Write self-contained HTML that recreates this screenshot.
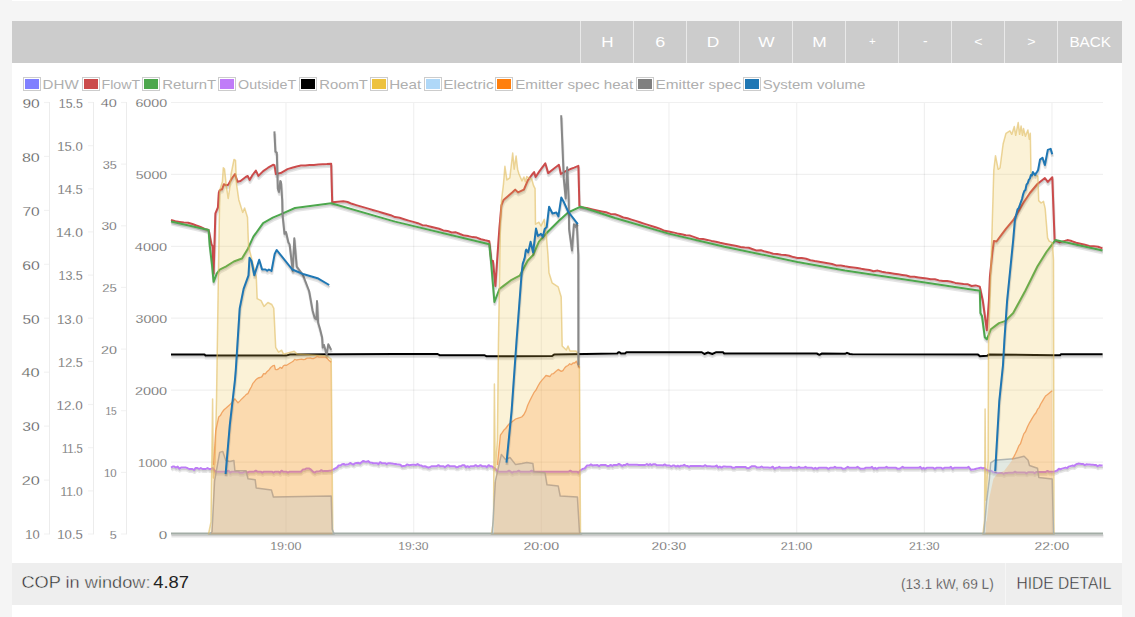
<!DOCTYPE html>
<html><head><meta charset="utf-8"><style>
html,body{margin:0;padding:0}
body{width:1135px;height:617px;position:relative;overflow:hidden;background:#f5f5f5;font-family:"Liberation Sans",sans-serif}
.panel{position:absolute;left:12px;top:63px;width:1110px;height:560px;background:#fff}
.toprow{position:absolute;left:12px;top:0;width:1110px;height:1px;background:#fff}
.bar{position:absolute;left:12px;top:21px;width:1110px;height:42px;background:#cccccc}
.btn{position:absolute;top:21px;height:42px;border-left:1px solid #e9e9e9;color:#fff;font-size:14px;line-height:41px;text-align:center}
.lb{position:absolute;top:77px;width:16px;height:12px;border:1px solid #ccc;box-sizing:content-box}
.lb div{position:absolute;left:1px;top:1px;width:14px;height:10px}
.lt{position:absolute;top:76px;font-size:13px;line-height:16px;color:#a6a6a6;white-space:nowrap}
.lab{position:absolute;line-height:1;white-space:nowrap;transform-origin:100% 50%;text-align:right}
.xl{position:absolute;top:540px;width:60px;text-align:center;font-size:11.5px;line-height:12px;color:#555}
.foot{position:absolute;left:12px;top:563px;width:1110px;height:42px;background:#eeeeee}
.cop{position:absolute;left:22px;top:572px;font-size:17px;line-height:20px;color:#333;white-space:nowrap}
.kw{position:absolute;left:901px;top:574px;font-size:15px;line-height:18px;color:#444;white-space:nowrap}
.sep{position:absolute;left:1005px;top:563px;width:1px;height:42px;background:#f6f6f6}
.hide{position:absolute;left:1017px;top:574px;font-size:15.5px;line-height:18px;color:#333;white-space:nowrap}
svg{position:absolute;left:0;top:0}
</style></head><body>
<div class="toprow"></div>
<div class="panel"></div>
<div class="bar"></div>
<div class="btn" style="left:580px;width:52px"></div><div class="btn" style="left:633px;width:52px"></div><div class="btn" style="left:686px;width:52px"></div><div class="btn" style="left:739px;width:52px"></div><div class="btn" style="left:792px;width:52px"></div><div class="btn" style="left:845px;width:52px"></div><div class="btn" style="left:898px;width:52px"></div><div class="btn" style="left:951px;width:52px"></div><div class="btn" style="left:1004px;width:52px"></div><div class="btn" style="left:1057px;width:64px"></div>
<div class="lb" style="left:23px"><div style="background:#8080ff"></div></div><div class="lb" style="left:82px"><div style="background:#cb4b4b"></div></div><div class="lb" style="left:142px"><div style="background:#4da74d"></div></div><div class="lb" style="left:218px"><div style="background:#c07cf8"></div></div><div class="lb" style="left:299px"><div style="background:#000000"></div></div><div class="lb" style="left:370px"><div style="background:#edc240"></div></div><div class="lb" style="left:424px"><div style="background:#afd8f8"></div></div><div class="lb" style="left:495px"><div style="background:#ff7f0e"></div></div><div class="lb" style="left:636px"><div style="background:#808080"></div></div><div class="lb" style="left:743px"><div style="background:#1f77b4"></div></div>
<svg width="1135" height="617" viewBox="0 0 1135 617">
<line x1="171" y1="534.0" x2="1103" y2="534.0" stroke="#000" stroke-opacity="0.06" stroke-width="1.2"/><line x1="171" y1="462.1" x2="1103" y2="462.1" stroke="#000" stroke-opacity="0.06" stroke-width="1.2"/><line x1="171" y1="390.2" x2="1103" y2="390.2" stroke="#000" stroke-opacity="0.06" stroke-width="1.2"/><line x1="171" y1="318.2" x2="1103" y2="318.2" stroke="#000" stroke-opacity="0.06" stroke-width="1.2"/><line x1="171" y1="246.3" x2="1103" y2="246.3" stroke="#000" stroke-opacity="0.06" stroke-width="1.2"/><line x1="171" y1="174.4" x2="1103" y2="174.4" stroke="#000" stroke-opacity="0.06" stroke-width="1.2"/><line x1="171" y1="102.5" x2="1103" y2="102.5" stroke="#000" stroke-opacity="0.06" stroke-width="1.2"/><line x1="286.0" y1="103" x2="286.0" y2="534" stroke="#000" stroke-opacity="0.06" stroke-width="1.2"/><line x1="413.7" y1="103" x2="413.7" y2="534" stroke="#000" stroke-opacity="0.06" stroke-width="1.2"/><line x1="541.3" y1="103" x2="541.3" y2="534" stroke="#000" stroke-opacity="0.06" stroke-width="1.2"/><line x1="669.0" y1="103" x2="669.0" y2="534" stroke="#000" stroke-opacity="0.06" stroke-width="1.2"/><line x1="796.7" y1="103" x2="796.7" y2="534" stroke="#000" stroke-opacity="0.06" stroke-width="1.2"/><line x1="924.4" y1="103" x2="924.4" y2="534" stroke="#000" stroke-opacity="0.06" stroke-width="1.2"/><line x1="1052.0" y1="103" x2="1052.0" y2="534" stroke="#000" stroke-opacity="0.06" stroke-width="1.2"/><line x1="49.5" y1="102" x2="49.5" y2="534.5" stroke="#000" stroke-opacity="0.075" stroke-width="1"/><line x1="93.5" y1="102" x2="93.5" y2="534.5" stroke="#000" stroke-opacity="0.075" stroke-width="1"/><line x1="126.5" y1="102" x2="126.5" y2="534.5" stroke="#000" stroke-opacity="0.075" stroke-width="1"/><line x1="44" y1="534.0" x2="49" y2="534.0" stroke="#000" stroke-opacity="0.05" stroke-width="1.2"/><line x1="44" y1="480.1" x2="49" y2="480.1" stroke="#000" stroke-opacity="0.05" stroke-width="1.2"/><line x1="44" y1="426.1" x2="49" y2="426.1" stroke="#000" stroke-opacity="0.05" stroke-width="1.2"/><line x1="44" y1="372.2" x2="49" y2="372.2" stroke="#000" stroke-opacity="0.05" stroke-width="1.2"/><line x1="44" y1="318.2" x2="49" y2="318.2" stroke="#000" stroke-opacity="0.05" stroke-width="1.2"/><line x1="44" y1="264.3" x2="49" y2="264.3" stroke="#000" stroke-opacity="0.05" stroke-width="1.2"/><line x1="44" y1="210.4" x2="49" y2="210.4" stroke="#000" stroke-opacity="0.05" stroke-width="1.2"/><line x1="44" y1="156.4" x2="49" y2="156.4" stroke="#000" stroke-opacity="0.05" stroke-width="1.2"/><line x1="44" y1="102.5" x2="49" y2="102.5" stroke="#000" stroke-opacity="0.05" stroke-width="1.2"/><line x1="88" y1="534.0" x2="93" y2="534.0" stroke="#000" stroke-opacity="0.05" stroke-width="1.2"/><line x1="88" y1="490.9" x2="93" y2="490.9" stroke="#000" stroke-opacity="0.05" stroke-width="1.2"/><line x1="88" y1="447.7" x2="93" y2="447.7" stroke="#000" stroke-opacity="0.05" stroke-width="1.2"/><line x1="88" y1="404.5" x2="93" y2="404.5" stroke="#000" stroke-opacity="0.05" stroke-width="1.2"/><line x1="88" y1="361.4" x2="93" y2="361.4" stroke="#000" stroke-opacity="0.05" stroke-width="1.2"/><line x1="88" y1="318.2" x2="93" y2="318.2" stroke="#000" stroke-opacity="0.05" stroke-width="1.2"/><line x1="88" y1="275.1" x2="93" y2="275.1" stroke="#000" stroke-opacity="0.05" stroke-width="1.2"/><line x1="88" y1="231.9" x2="93" y2="231.9" stroke="#000" stroke-opacity="0.05" stroke-width="1.2"/><line x1="88" y1="188.8" x2="93" y2="188.8" stroke="#000" stroke-opacity="0.05" stroke-width="1.2"/><line x1="88" y1="145.7" x2="93" y2="145.7" stroke="#000" stroke-opacity="0.05" stroke-width="1.2"/><line x1="88" y1="102.5" x2="93" y2="102.5" stroke="#000" stroke-opacity="0.05" stroke-width="1.2"/><line x1="121" y1="534.0" x2="126" y2="534.0" stroke="#000" stroke-opacity="0.05" stroke-width="1.2"/><line x1="121" y1="472.4" x2="126" y2="472.4" stroke="#000" stroke-opacity="0.05" stroke-width="1.2"/><line x1="121" y1="410.7" x2="126" y2="410.7" stroke="#000" stroke-opacity="0.05" stroke-width="1.2"/><line x1="121" y1="349.1" x2="126" y2="349.1" stroke="#000" stroke-opacity="0.05" stroke-width="1.2"/><line x1="121" y1="287.4" x2="126" y2="287.4" stroke="#000" stroke-opacity="0.05" stroke-width="1.2"/><line x1="121" y1="225.8" x2="126" y2="225.8" stroke="#000" stroke-opacity="0.05" stroke-width="1.2"/><line x1="121" y1="164.1" x2="126" y2="164.1" stroke="#000" stroke-opacity="0.05" stroke-width="1.2"/><line x1="121" y1="102.5" x2="126" y2="102.5" stroke="#000" stroke-opacity="0.05" stroke-width="1.2"/><polyline points="171.4,536.0 1103.4,536.0" fill="none" stroke="#000" stroke-opacity="0.1" stroke-width="3.0" stroke-linejoin="round"/><polyline points="171.3,535.2 1103.3,535.2" fill="none" stroke="#000" stroke-opacity="0.1" stroke-width="1.5" stroke-linejoin="round"/><polyline points="171.0,533.5 1103.0,533.5" fill="none" stroke="#a3ada6" stroke-width="2" stroke-linejoin="round"/><polyline points="171.4,222.5 175.7,223.7 180.0,224.4 184.3,225.1 188.6,225.2 192.8,226.5 196.9,227.9 200.9,229.4 205.0,231.5 209.0,232.4 211.9,247.0 213.0,248.5 214.0,276.2 215.8,215.8 218.3,210.0 219.2,195.4 219.9,193.1 221.3,192.1 222.4,192.0 224.2,186.8 226.7,187.7 228.6,187.2 232.5,180.5 235.4,176.5 237.9,184.3 240.9,183.5 246.1,179.5 248.1,178.5 250.0,182.4 252.9,177.5 256.3,173.1 258.8,178.4 263.6,173.6 268.5,170.2 273.4,167.3 274.9,167.8 276.3,176.5 281.1,175.6 287.9,171.6 292.5,170.3 297.1,169.0 301.4,168.1 305.8,167.8 310.1,167.6 314.4,167.3 318.7,167.0 323.0,166.8 327.3,166.5 331.6,166.3 332.6,204.8 338.2,204.3 343.7,203.8 348.0,204.4 352.4,206.3 356.7,207.6 361.0,208.8 365.3,210.1 369.6,211.4 373.9,212.6 378.2,213.9 382.5,215.2 386.8,216.4 391.1,217.7 395.4,219.6 400.0,220.3 404.6,221.7 409.1,223.0 413.7,224.4 418.3,225.7 422.8,227.7 427.0,228.1 431.2,229.1 435.4,230.2 439.6,231.2 443.7,232.9 447.9,233.3 452.1,235.0 456.3,234.8 460.5,236.5 464.6,238.1 468.8,238.5 473.0,239.6 477.2,240.0 481.4,241.7 485.6,242.7 489.7,243.8 491.7,263.0 493.4,263.5 495.8,288.4 497.8,259.0 499.8,230.5 501.8,207.9 503.9,202.5 508.3,198.7 512.6,195.0 515.6,192.1 518.5,194.9 524.3,192.1 528.2,182.8 532.1,177.5 534.5,174.6 536.0,179.5 539.9,173.6 545.7,165.8 548.6,175.6 553.5,171.7 559.3,167.3 561.3,176.5 566.1,173.6 570.4,171.8 574.6,170.0 578.8,168.3 579.8,208.2 581.1,209.8 587.1,210.5 593.0,211.9 597.5,212.8 602.0,213.8 606.5,214.8 611.0,216.4 615.4,216.8 619.6,218.1 623.7,220.0 627.8,220.7 632.0,222.1 636.1,223.4 640.2,224.7 644.3,226.0 648.5,227.3 652.6,228.7 656.7,230.0 660.9,231.3 665.0,233.2 669.1,234.0 673.4,234.9 677.7,235.8 682.0,236.8 686.3,237.7 690.6,238.1 694.8,239.6 699.1,241.1 703.4,241.5 707.7,242.4 712.0,243.3 716.3,244.3 720.5,245.2 724.8,246.2 728.9,247.0 732.9,247.7 737.0,248.5 741.1,249.3 745.1,250.1 749.2,250.3 753.2,251.7 757.3,253.1 761.3,252.7 765.4,254.1 769.4,254.8 773.5,256.2 777.6,256.4 781.6,257.2 785.7,257.4 789.7,258.2 793.8,259.6 797.8,260.4 802.2,260.5 806.5,261.3 810.8,262.7 815.1,263.4 819.5,264.2 823.8,264.9 828.1,265.7 832.5,266.5 836.8,267.8 841.1,268.0 845.4,268.8 849.5,269.4 853.6,270.0 857.7,270.6 861.8,271.2 865.9,271.8 869.9,272.5 874.0,273.7 878.1,273.1 882.2,274.3 886.3,274.9 890.4,275.5 894.5,276.1 898.5,276.8 902.6,277.4 906.7,278.0 910.8,279.2 914.9,279.2 919.0,279.8 923.0,280.4 927.1,281.1 931.2,281.7 935.3,281.7 939.4,282.9 943.5,283.5 947.6,283.5 951.6,284.2 955.7,285.4 959.8,286.0 963.9,286.6 968.0,286.6 972.1,288.4 976.1,287.8 980.2,289.1 983.2,303.3 987.2,332.7 989.3,303.3 990.3,279.0 992.8,254.5 994.3,243.4 996.9,244.0 1001.8,237.4 1006.3,231.4 1013.8,222.4 1019.1,213.4 1024.3,204.5 1030.3,195.5 1037.8,186.5 1045.3,180.5 1048.2,184.4 1052.7,179.7 1055.0,242.5 1060.2,244.9 1067.7,242.6 1072.1,243.6 1076.5,245.2 1080.9,246.3 1085.3,247.3 1089.7,248.3 1094.1,248.8 1098.5,249.2 1102.9,250.9" fill="none" stroke="#000" stroke-opacity="0.1" stroke-width="3.0" stroke-linejoin="round"/><polyline points="171.3,221.7 175.6,223.0 179.9,223.7 184.1,224.4 188.4,224.4 192.7,225.7 196.8,227.2 200.8,228.7 204.9,230.7 208.9,231.6 211.8,246.2 212.9,247.7 213.9,275.4 215.7,215.0 218.2,209.2 219.1,194.6 219.8,192.3 221.2,191.3 222.3,191.2 224.1,186.0 226.6,186.9 228.5,186.4 232.4,179.7 235.3,175.7 237.8,183.5 240.8,182.7 246.0,178.7 248.0,177.7 249.9,181.6 252.8,176.7 256.2,172.3 258.7,177.6 263.5,172.8 268.4,169.4 273.3,166.5 274.8,167.0 276.2,175.7 281.0,174.8 287.8,170.8 292.4,169.5 297.0,168.2 301.3,167.4 305.6,167.1 309.9,166.8 314.3,166.6 318.6,166.3 322.9,166.0 327.2,165.8 331.5,165.5 332.5,204.0 338.1,203.5 343.6,203.0 347.9,203.7 352.2,205.6 356.5,206.8 360.8,208.1 365.1,209.4 369.5,210.6 373.8,211.9 378.1,213.2 382.4,214.4 386.7,215.7 391.0,217.0 395.3,218.8 399.9,219.6 404.4,220.9 409.0,222.3 413.6,223.6 418.1,225.0 422.7,226.9 426.9,227.4 431.1,228.4 435.2,229.5 439.4,230.5 443.6,232.1 447.8,232.6 452.0,234.2 456.2,234.1 460.3,235.7 464.5,237.4 468.7,237.8 472.9,238.8 477.1,239.3 481.2,240.9 485.4,242.0 489.6,243.0 491.6,262.2 493.3,262.7 495.7,287.6 497.7,258.2 499.7,229.7 501.7,207.1 503.8,201.7 508.2,198.0 512.5,194.2 515.5,191.3 518.4,194.1 524.2,191.3 528.1,182.0 532.0,176.7 534.4,173.8 535.9,178.7 539.8,172.8 545.6,165.0 548.5,174.8 553.4,170.9 559.2,166.5 561.2,175.7 566.0,172.8 570.2,171.1 574.5,169.3 578.7,167.5 579.7,207.4 581.0,209.0 587.0,209.8 592.9,211.1 597.4,212.1 601.9,213.1 606.3,214.1 610.8,215.6 615.3,216.0 619.4,217.3 623.6,219.3 627.7,220.0 631.8,221.3 636.0,222.6 640.1,224.0 644.2,225.3 648.4,226.6 652.5,227.9 656.6,229.3 660.7,230.6 664.9,232.5 669.0,233.2 673.3,234.2 677.6,235.1 681.9,236.0 686.1,237.0 690.4,237.3 694.7,238.9 699.0,240.4 703.3,240.7 707.6,241.7 711.9,242.6 716.1,243.5 720.4,244.5 724.7,245.4 728.8,246.2 732.8,247.0 736.9,247.8 740.9,248.6 745.0,249.4 749.0,249.6 753.1,250.9 757.1,252.3 761.2,251.9 765.3,253.3 769.3,254.1 773.4,255.5 777.4,255.7 781.5,256.5 785.5,256.7 789.6,257.4 793.6,258.8 797.7,259.6 802.0,259.8 806.4,260.6 810.7,261.9 815.0,262.7 819.3,263.4 823.7,264.2 828.0,265.0 832.3,265.7 836.6,267.1 841.0,267.3 845.3,268.0 849.4,268.6 853.5,269.3 857.6,269.9 861.6,270.5 865.7,271.1 869.8,271.7 873.9,272.9 878.0,272.3 882.1,273.6 886.2,274.2 890.2,274.8 894.3,275.4 898.4,276.0 902.5,276.6 906.6,277.3 910.7,278.5 914.7,278.5 918.8,279.1 922.9,279.7 927.0,280.3 931.1,280.9 935.2,281.0 939.3,282.2 943.3,282.8 947.4,282.8 951.5,283.4 955.6,284.6 959.7,285.2 963.8,285.9 967.8,285.9 971.9,287.7 976.0,287.1 980.1,288.3 983.1,302.5 987.1,331.9 989.2,302.5 990.2,278.2 992.7,253.7 994.2,242.6 996.8,243.2 1001.7,236.6 1006.2,230.6 1013.7,221.6 1019.0,212.7 1024.2,203.7 1030.2,194.7 1037.7,185.7 1045.2,179.7 1048.1,183.6 1052.6,178.9 1054.9,241.7 1060.1,244.1 1067.6,241.8 1072.0,242.9 1076.4,244.5 1080.8,245.5 1085.2,246.6 1089.6,247.6 1094.0,248.0 1098.4,248.5 1102.8,250.1" fill="none" stroke="#000" stroke-opacity="0.1" stroke-width="1.5" stroke-linejoin="round"/><polyline points="171.0,220.0 175.3,221.3 179.6,222.0 183.8,222.6 188.1,222.7 192.4,224.0 196.4,225.5 200.5,226.9 204.6,229.0 208.6,229.9 211.5,244.5 212.6,246.0 213.6,273.7 215.4,213.3 217.9,207.5 218.8,192.9 219.5,190.6 220.9,189.6 222.0,189.5 223.8,184.3 226.3,185.2 228.2,184.7 232.1,178.0 235.0,174.0 237.5,181.8 240.5,181.0 245.7,177.0 247.7,176.0 249.6,179.9 252.5,175.0 255.9,170.6 258.4,175.9 263.2,171.1 268.1,167.7 273.0,164.8 274.5,165.3 275.9,174.0 280.7,173.1 287.5,169.1 292.1,167.8 296.7,166.5 301.0,165.6 305.3,165.4 309.6,165.1 313.9,164.9 318.3,164.6 322.6,164.3 326.9,164.1 331.2,163.8 332.2,202.3 337.8,201.8 343.3,201.3 347.6,202.0 351.9,203.8 356.2,205.1 360.5,206.4 364.8,207.6 369.1,208.9 373.5,210.2 377.8,211.4 382.1,212.7 386.4,214.0 390.7,215.2 395.0,217.1 399.6,217.8 404.1,219.2 408.7,220.6 413.3,221.9 417.8,223.2 422.4,225.2 426.6,225.6 430.8,226.7 434.9,227.7 439.1,228.8 443.3,230.4 447.5,230.9 451.7,232.5 455.9,232.3 460.0,234.0 464.2,235.6 468.4,236.1 472.6,237.1 476.8,237.6 480.9,239.2 485.1,240.3 489.3,241.3 491.3,260.5 493.0,261.0 495.4,285.9 497.4,256.5 499.4,228.0 501.4,205.4 503.5,200.0 507.9,196.2 512.2,192.5 515.2,189.6 518.1,192.4 523.9,189.6 527.8,180.3 531.7,175.0 534.1,172.1 535.6,177.0 539.5,171.1 545.3,163.3 548.2,173.1 553.1,169.2 558.9,164.8 560.9,174.0 565.7,171.1 569.9,169.3 574.2,167.6 578.4,165.8 579.4,205.7 580.7,207.3 586.7,208.1 592.6,209.4 597.1,210.4 601.6,211.4 606.0,212.3 610.5,213.9 615.0,214.3 619.1,215.6 623.3,217.5 627.4,218.3 631.5,219.6 635.7,220.9 639.8,222.2 643.9,223.6 648.0,224.9 652.2,226.2 656.3,227.5 660.4,228.9 664.6,230.8 668.7,231.5 673.0,232.4 677.3,233.4 681.6,234.3 685.8,235.3 690.1,235.6 694.4,237.1 698.7,238.7 703.0,239.0 707.3,239.9 711.5,240.9 715.8,241.8 720.1,242.8 724.4,243.7 728.5,244.5 732.5,245.3 736.6,246.1 740.6,246.9 744.7,247.6 748.7,247.8 752.8,249.2 756.8,250.6 760.9,250.2 765.0,251.6 769.0,252.4 773.1,253.8 777.1,254.0 781.2,254.7 785.2,254.9 789.3,255.7 793.3,257.1 797.4,257.9 801.7,258.1 806.1,258.8 810.4,260.2 814.7,261.0 819.0,261.7 823.4,262.5 827.7,263.2 832.0,264.0 836.3,265.4 840.7,265.5 845.0,266.3 849.1,266.9 853.2,267.5 857.3,268.1 861.3,268.8 865.4,269.4 869.5,270.0 873.6,271.2 877.7,270.6 881.8,271.8 885.8,272.5 889.9,273.1 894.0,273.7 898.1,274.3 902.2,274.9 906.3,275.5 910.4,276.7 914.4,276.8 918.5,277.4 922.6,278.0 926.7,278.6 930.8,279.2 934.9,279.2 939.0,280.4 943.0,281.1 947.1,281.1 951.2,281.7 955.3,282.9 959.4,283.5 963.5,284.1 967.5,284.2 971.6,286.0 975.7,285.4 979.8,286.6 982.8,300.8 986.8,330.2 988.9,300.8 989.9,276.5 992.4,252.0 993.9,240.9 996.5,241.5 1001.4,234.9 1005.9,228.9 1013.4,219.9 1018.6,210.9 1023.9,202.0 1029.9,193.0 1037.4,184.0 1044.9,178.0 1047.8,181.9 1052.3,177.2 1054.6,240.0 1059.8,242.4 1067.3,240.1 1071.7,241.1 1076.1,242.8 1080.5,243.8 1084.9,244.8 1089.3,245.9 1093.7,246.3 1098.1,246.8 1102.5,248.4" fill="none" stroke="#cb4b4b" stroke-width="2" stroke-linejoin="round"/><polyline points="171.4,224.1 209.0,232.6 210.0,246.8 212.4,267.5 214.0,284.3 217.1,276.2 220.1,272.1 226.2,269.1 234.3,264.0 242.4,261.0 248.4,250.9 253.8,239.2 263.5,225.6 273.2,220.2 281.0,216.8 295.4,210.5 331.6,205.8 395.4,224.1 489.7,246.8 491.7,267.1 494.8,304.5 499.8,291.5 503.9,288.4 512.0,282.3 520.1,278.2 528.2,263.0 533.5,257.5 539.3,244.2 549.0,233.5 558.8,223.8 568.5,215.0 581.1,209.2 600.4,215.5 615.4,220.5 669.1,236.1 724.8,249.2 797.8,264.5 845.4,272.9 980.2,293.2 980.8,315.5 982.4,318.5 985.2,339.8 987.2,341.8 991.3,331.7 995.4,328.6 999.4,325.6 1005.5,323.6 1013.6,315.5 1025.7,293.2 1037.9,268.8 1046.8,254.5 1055.7,242.6 1102.9,253.1" fill="none" stroke="#000" stroke-opacity="0.1" stroke-width="3.0" stroke-linejoin="round"/><polyline points="171.3,223.3 208.9,231.8 209.9,246.0 212.3,266.7 213.9,283.5 217.0,275.4 220.0,271.3 226.1,268.3 234.2,263.2 242.3,260.2 248.3,250.1 253.7,238.4 263.4,224.8 273.1,219.4 280.9,216.0 295.3,209.7 331.5,205.0 395.3,223.3 489.6,246.0 491.6,266.3 494.7,303.7 499.7,290.7 503.8,287.6 511.9,281.5 520.0,277.4 528.1,262.2 533.4,256.7 539.2,243.4 548.9,232.7 558.7,223.0 568.4,214.2 581.0,208.4 600.3,214.7 615.3,219.7 669.0,235.3 724.7,248.4 797.7,263.7 845.3,272.1 980.1,292.4 980.7,314.7 982.3,317.7 985.1,339.0 987.1,341.0 991.2,330.9 995.3,327.8 999.3,324.8 1005.4,322.8 1013.5,314.7 1025.6,292.4 1037.8,268.0 1046.7,253.7 1055.6,241.8 1102.8,252.3" fill="none" stroke="#000" stroke-opacity="0.1" stroke-width="1.5" stroke-linejoin="round"/><polyline points="171.0,221.6 208.6,230.1 209.6,244.3 212.0,265.0 213.6,281.8 216.7,273.7 219.7,269.6 225.8,266.6 233.9,261.5 242.0,258.5 248.0,248.4 253.4,236.7 263.1,223.1 272.8,217.7 280.6,214.3 295.0,208.0 331.2,203.3 395.0,221.6 489.3,244.3 491.3,264.6 494.4,302.0 499.4,289.0 503.5,285.9 511.6,279.8 519.7,275.7 527.8,260.5 533.1,255.0 538.9,241.7 548.6,231.0 558.4,221.3 568.1,212.5 580.7,206.7 600.0,213.0 615.0,218.0 668.7,233.6 724.4,246.7 797.4,262.0 845.0,270.4 979.8,290.7 980.4,313.0 982.0,316.0 984.8,337.3 986.8,339.3 990.9,329.2 995.0,326.1 999.0,323.1 1005.1,321.1 1013.2,313.0 1025.3,290.7 1037.5,266.3 1046.4,252.0 1055.3,240.1 1102.5,250.6" fill="none" stroke="#4da74d" stroke-width="2" stroke-linejoin="round"/><polyline points="171.4,470.1 173.1,469.1 174.8,469.1 176.4,470.1 178.1,469.1 179.8,471.1 181.4,470.1 183.1,470.1 184.8,470.1 186.4,470.1 187.7,470.5 189.4,471.5 191.1,471.5 192.8,471.5 194.5,472.5 196.2,470.5 197.9,470.5 199.5,471.5 201.2,470.5 202.9,471.5 204.6,471.5 206.3,471.5 208.0,470.5 209.7,471.5 211.3,471.5 213.0,470.5 216.1,474.2 217.7,474.2 219.3,474.2 221.0,474.2 222.6,474.2 224.2,474.2 225.8,474.2 227.4,474.2 229.0,473.2 230.6,475.2 232.2,474.2 233.8,474.2 235.4,474.2 237.0,474.2 238.6,474.2 240.2,475.2 241.8,475.2 243.4,475.2 245.0,474.2 246.6,474.2 248.2,475.2 249.9,474.2 251.5,474.2 253.1,474.2 254.7,474.2 256.3,473.2 257.9,474.2 259.5,474.2 261.1,474.2 262.7,475.2 264.3,474.2 265.9,474.2 267.5,474.2 269.1,474.2 270.7,474.2 272.3,474.2 273.9,475.2 275.5,474.2 277.1,474.2 278.8,474.2 280.4,475.2 282.0,473.2 283.6,474.2 285.2,474.2 286.8,474.2 288.4,475.2 290.0,474.2 291.6,474.2 293.2,474.2 294.8,474.2 296.4,474.2 298.0,474.2 299.6,474.2 301.2,474.2 303.2,472.1 304.9,472.1 306.5,471.1 308.2,471.1 309.8,471.1 311.4,472.1 313.4,474.2 315.1,475.1 316.7,474.0 318.4,473.9 320.1,473.8 321.7,472.7 323.4,473.6 325.0,473.5 326.7,473.4 328.3,473.3 330.0,473.3 331.6,473.2 333.5,472.1 335.4,471.1 337.2,470.0 339.1,468.0 340.9,468.0 342.6,466.7 344.2,466.5 345.8,467.2 347.4,467.0 349.1,466.7 350.7,465.5 352.3,466.2 353.9,467.0 355.6,465.7 357.2,465.5 358.8,465.2 360.4,466.0 363.4,463.5 365.2,463.8 366.9,464.2 368.7,463.6 370.4,464.9 372.2,465.3 373.9,465.7 375.6,465.7 377.2,465.7 378.9,466.7 380.5,464.7 382.2,465.7 383.8,465.7 385.5,465.7 387.1,466.7 388.8,465.7 390.4,465.7 392.2,465.9 393.9,466.2 395.6,466.4 397.4,466.7 399.1,466.9 400.8,467.2 402.4,468.7 404.2,468.4 405.9,468.2 407.6,466.9 409.4,467.7 411.1,467.4 412.8,467.2 414.6,467.3 416.3,467.4 418.1,466.6 419.8,467.7 421.6,467.8 423.3,469.0 425.3,468.7 427.3,469.4 429.3,470.2 432.3,468.7 434.0,468.7 435.6,468.7 437.2,468.7 438.8,467.7 440.4,468.7 442.0,468.7 443.7,468.7 445.3,469.7 446.9,468.7 448.5,467.7 450.1,468.7 451.8,468.7 453.4,468.7 455.0,468.7 456.6,469.7 458.2,469.7 459.9,468.7 461.5,468.7 463.1,467.7 464.7,467.7 466.3,469.7 468.0,468.7 469.6,469.7 471.2,468.7 472.8,468.7 474.4,468.7 476.0,467.7 477.7,468.7 479.3,468.7 480.9,467.7 482.5,468.7 484.1,468.7 485.8,468.7 487.4,469.7 489.0,467.7 490.6,468.7 492.2,468.7 494.1,470.0 496.0,471.4 497.9,473.8 499.7,474.2 501.3,474.2 503.0,474.2 504.6,474.2 506.2,474.2 507.8,474.2 509.4,473.2 511.0,474.2 512.6,475.2 514.3,474.2 515.9,474.2 517.5,474.2 519.1,473.2 520.7,474.2 522.3,474.2 523.9,474.2 525.6,474.2 527.2,474.2 528.8,474.2 530.4,474.2 532.0,473.2 533.6,474.2 535.2,474.2 536.9,474.2 538.5,474.2 540.1,474.2 541.7,474.2 543.3,474.2 544.9,474.2 546.5,474.2 548.2,474.2 549.8,474.2 551.4,474.2 553.0,474.2 554.6,474.2 556.2,474.2 557.8,474.2 559.5,474.2 561.1,474.2 562.7,474.2 564.3,474.2 565.9,474.2 567.5,474.2 569.1,474.2 570.8,473.2 572.4,474.2 574.0,474.2 575.6,474.2 577.2,474.2 578.8,475.2 580.9,472.8 582.9,471.4 584.9,471.1 587.3,468.0 589.7,468.0 591.4,466.9 593.0,467.8 594.6,467.7 596.2,467.7 597.9,467.6 599.5,468.5 601.1,467.5 602.8,467.5 604.4,467.4 606.1,467.4 607.8,468.4 609.4,468.4 611.1,467.4 612.7,468.4 614.4,467.4 616.0,467.4 617.7,467.4 619.4,466.4 621.0,467.3 622.7,468.3 624.3,467.3 626.0,467.3 627.6,466.3 629.3,467.3 631.0,467.3 632.6,467.3 634.3,467.3 635.9,467.3 637.6,467.3 639.2,467.3 640.8,467.4 642.4,467.4 644.0,467.4 645.7,467.5 647.3,466.5 648.9,467.5 650.5,466.6 652.2,467.6 653.8,466.6 655.4,466.7 657.0,467.7 658.7,467.7 660.3,467.8 661.9,467.8 663.5,467.8 665.1,466.9 666.8,467.9 668.4,467.9 670.0,468.0 671.6,469.0 673.3,468.0 674.9,468.1 676.5,469.1 678.1,468.1 679.7,469.2 681.4,468.2 683.0,468.2 684.6,467.3 686.2,468.3 687.9,468.3 689.5,469.4 691.1,468.4 692.7,468.4 694.4,468.5 696.0,468.5 697.6,468.5 699.2,468.6 700.8,468.6 702.5,468.6 704.1,468.7 705.7,467.7 707.3,468.7 709.0,468.8 710.6,468.8 712.2,468.8 713.8,468.9 715.5,468.9 717.1,467.9 718.7,470.0 720.3,469.0 721.9,470.0 723.6,469.1 725.2,469.1 726.8,469.1 728.4,469.2 730.0,469.2 731.6,469.2 733.2,470.3 734.8,470.3 736.4,469.3 738.0,469.4 739.6,469.4 741.2,469.5 742.8,469.5 744.4,469.5 746.0,469.6 747.6,470.6 749.2,470.6 750.8,469.7 752.4,468.7 754.0,468.7 755.6,468.8 757.2,469.8 758.8,469.9 760.4,469.9 762.0,468.9 763.6,470.0 765.2,470.0 766.8,470.0 768.4,470.1 770.0,470.1 771.6,470.2 773.2,469.2 774.8,471.2 776.4,470.3 778.1,470.3 779.7,469.3 781.3,470.3 783.0,470.3 784.6,470.3 786.3,470.3 787.9,470.3 789.5,470.3 791.2,469.3 792.8,470.3 794.5,470.3 796.1,470.3 797.7,470.3 799.4,469.3 801.0,470.3 802.6,470.3 804.3,470.3 805.9,469.3 807.6,470.3 809.2,470.3 810.8,470.3 812.5,470.3 814.1,471.3 815.8,470.3 817.4,471.3 819.0,470.3 820.7,470.3 822.3,470.3 823.9,470.3 825.6,470.3 827.2,470.3 828.9,471.3 830.5,470.3 832.1,470.3 833.7,470.3 835.4,469.3 837.0,470.3 838.6,470.3 840.2,470.3 841.8,470.3 843.4,471.3 845.0,471.3 846.6,470.3 848.2,469.3 849.9,470.3 851.5,470.3 853.1,470.3 854.7,470.3 856.3,470.3 857.9,469.3 859.5,470.3 861.1,471.3 862.7,471.3 864.3,471.3 866.0,470.3 867.6,470.3 869.2,470.3 870.8,470.3 872.4,469.3 874.0,471.3 875.6,470.3 877.2,471.3 878.8,470.3 880.5,470.3 882.1,470.3 883.7,470.3 885.3,470.3 886.9,469.3 888.5,470.3 890.1,470.3 891.7,470.3 893.3,470.3 894.9,470.3 896.6,470.3 898.2,471.3 899.8,471.3 901.4,470.3 903.0,469.3 904.6,470.3 906.2,470.3 907.8,470.3 909.4,470.3 911.1,470.3 912.7,470.3 914.3,470.3 915.9,470.3 917.5,470.3 919.1,470.3 920.7,469.3 922.3,471.3 923.9,470.3 925.5,471.3 927.2,470.3 928.8,470.3 930.4,470.3 932.0,470.3 933.6,470.3 935.2,471.3 936.8,470.3 938.4,470.3 940.0,470.3 941.7,470.3 943.3,471.3 944.9,470.3 946.5,470.3 948.1,470.3 949.7,470.3 951.3,469.3 952.9,471.3 954.5,470.3 956.1,470.3 957.8,470.3 959.4,470.3 961.0,470.3 962.6,470.3 964.2,470.3 965.8,470.3 967.4,470.3 969.0,469.3 971.2,472.2 973.4,472.1 975.0,471.7 976.6,471.3 978.2,470.9 979.8,470.5 981.4,470.1 983.1,470.7 984.8,470.4 986.5,472.1 988.2,472.8 989.9,473.5 991.6,473.2 993.7,474.6 995.7,475.1 997.7,475.6 999.4,475.5 1001.0,475.5 1002.6,475.4 1004.2,476.4 1005.8,475.4 1007.5,475.3 1009.1,475.3 1010.7,475.2 1012.3,475.2 1013.9,475.2 1015.6,474.1 1017.2,475.1 1018.8,475.0 1020.4,475.0 1022.0,475.0 1023.7,474.9 1025.3,474.9 1026.9,475.8 1028.5,474.8 1030.1,474.8 1031.8,474.7 1033.4,474.7 1035.0,475.6 1036.6,474.6 1038.2,474.6 1039.9,474.5 1041.5,474.5 1043.1,474.4 1044.7,474.4 1046.3,474.4 1048.0,473.3 1049.6,474.3 1051.2,474.2 1052.8,474.2 1054.4,474.2 1056.1,473.5 1057.7,472.9 1059.3,471.3 1060.9,471.7 1062.5,471.1 1064.2,470.6 1065.9,470.1 1067.6,470.6 1069.3,469.1 1071.0,468.6 1072.6,468.1 1074.7,468.4 1076.7,466.7 1078.7,466.1 1080.4,466.2 1082.0,466.3 1083.6,466.5 1085.2,467.6 1086.8,466.7 1088.5,466.9 1090.1,467.0 1091.7,467.1 1093.3,467.3 1094.9,467.4 1096.6,467.5 1098.2,468.7 1099.8,467.8 1101.4,467.9 1103.0,468.1" fill="none" stroke="#000" stroke-opacity="0.1" stroke-width="3.0" stroke-linejoin="round"/><polyline points="171.3,469.3 173.0,468.3 174.6,468.3 176.3,469.3 178.0,468.3 179.6,470.3 181.3,469.3 183.0,469.3 184.6,469.3 186.3,469.3 187.6,469.7 189.3,470.7 191.0,470.7 192.7,470.7 194.4,471.7 196.0,469.7 197.7,469.7 199.4,470.7 201.1,469.7 202.8,470.7 204.5,470.7 206.2,470.7 207.8,469.7 209.5,470.7 211.2,470.7 212.9,469.7 216.0,473.4 217.6,473.4 219.2,473.4 220.8,473.4 222.4,473.4 224.0,473.4 225.6,473.4 227.2,473.4 228.8,472.4 230.5,474.4 232.1,473.4 233.7,473.4 235.3,473.4 236.9,473.4 238.5,473.4 240.1,474.4 241.7,474.4 243.3,474.4 244.9,473.4 246.5,473.4 248.1,474.4 249.7,473.4 251.3,473.4 252.9,473.4 254.5,473.4 256.1,472.4 257.8,473.4 259.4,473.4 261.0,473.4 262.6,474.4 264.2,473.4 265.8,473.4 267.4,473.4 269.0,473.4 270.6,473.4 272.2,473.4 273.8,474.4 275.4,473.4 277.0,473.4 278.6,473.4 280.2,474.4 281.8,472.4 283.4,473.4 285.0,473.4 286.7,473.4 288.3,474.4 289.9,473.4 291.5,473.4 293.1,473.4 294.7,473.4 296.3,473.4 297.9,473.4 299.5,473.4 301.1,473.4 303.1,471.3 304.7,471.3 306.4,470.3 308.0,470.3 309.7,470.3 311.3,471.3 313.3,473.4 315.0,474.3 316.6,473.2 318.3,473.2 319.9,473.1 321.6,472.0 323.2,472.9 324.9,472.8 326.5,472.7 328.2,472.6 329.8,472.5 331.5,472.4 333.4,471.4 335.2,470.3 337.1,469.3 338.9,467.3 340.8,467.2 342.4,466.0 344.1,465.7 345.7,466.5 347.3,466.2 348.9,466.0 350.6,464.7 352.2,465.5 353.8,466.2 355.4,465.0 357.1,464.7 358.7,464.5 360.3,465.2 363.3,462.7 365.1,463.1 366.8,463.5 368.6,462.8 370.3,464.2 372.1,464.6 373.8,464.9 375.5,464.9 377.1,464.9 378.8,465.9 380.4,463.9 382.1,464.9 383.7,464.9 385.4,464.9 387.0,465.9 388.7,464.9 390.3,464.9 392.0,465.2 393.8,465.4 395.5,465.7 397.2,465.9 399.0,466.2 400.7,466.4 402.3,467.9 404.0,467.7 405.8,467.4 407.5,466.2 409.2,466.9 411.0,466.7 412.7,466.4 414.5,466.6 416.2,466.7 418.0,465.8 419.7,467.0 421.5,467.1 423.2,468.2 425.2,468.0 427.2,468.7 429.2,469.4 432.2,467.9 433.8,467.9 435.4,467.9 437.1,467.9 438.7,466.9 440.3,467.9 441.9,467.9 443.5,467.9 445.2,468.9 446.8,467.9 448.4,466.9 450.0,467.9 451.6,467.9 453.2,467.9 454.9,467.9 456.5,468.9 458.1,468.9 459.7,467.9 461.3,467.9 463.0,466.9 464.6,466.9 466.2,468.9 467.8,467.9 469.4,468.9 471.1,467.9 472.7,467.9 474.3,467.9 475.9,466.9 477.5,467.9 479.2,467.9 480.8,466.9 482.4,467.9 484.0,467.9 485.6,467.9 487.2,468.9 488.9,466.9 490.5,467.9 492.1,467.9 494.0,469.3 495.9,470.7 497.7,473.0 499.6,473.4 501.2,473.4 502.8,473.4 504.4,473.4 506.1,473.4 507.7,473.4 509.3,472.4 510.9,473.4 512.5,474.4 514.1,473.4 515.7,473.4 517.4,473.4 519.0,472.4 520.6,473.4 522.2,473.4 523.8,473.4 525.4,473.4 527.0,473.4 528.7,473.4 530.3,473.4 531.9,472.4 533.5,473.4 535.1,473.4 536.7,473.4 538.3,473.4 540.0,473.4 541.6,473.4 543.2,473.4 544.8,473.4 546.4,473.4 548.0,473.4 549.6,473.4 551.3,473.4 552.9,473.4 554.5,473.4 556.1,473.4 557.7,473.4 559.3,473.4 560.9,473.4 562.6,473.4 564.2,473.4 565.8,473.4 567.4,473.4 569.0,473.4 570.6,472.4 572.2,473.4 573.9,473.4 575.5,473.4 577.1,473.4 578.7,474.4 580.7,472.1 582.8,470.7 584.8,470.3 587.2,467.3 589.6,467.2 591.2,466.2 592.9,467.1 594.5,467.0 596.1,466.9 597.7,466.9 599.4,467.8 601.0,466.7 602.7,466.7 604.3,466.7 606.0,466.7 607.6,467.7 609.3,467.7 610.9,466.7 612.6,467.7 614.3,466.6 615.9,466.6 617.6,466.6 619.2,465.6 620.9,466.6 622.5,467.6 624.2,466.6 625.9,466.6 627.5,465.6 629.2,466.6 630.8,466.6 632.5,466.5 634.1,466.5 635.8,466.5 637.4,466.6 639.0,466.6 640.7,466.6 642.3,466.7 643.9,466.7 645.5,466.7 647.2,465.8 648.8,466.8 650.4,465.8 652.0,466.9 653.7,465.9 655.3,465.9 656.9,467.0 658.5,467.0 660.1,467.0 661.8,467.1 663.4,467.1 665.0,466.1 666.6,467.2 668.3,467.2 669.9,467.2 671.5,468.3 673.1,467.3 674.8,467.3 676.4,468.4 678.0,467.4 679.6,468.4 681.2,467.5 682.9,467.5 684.5,466.5 686.1,467.6 687.7,467.6 689.4,468.6 691.0,467.7 692.6,467.7 694.2,467.7 695.8,467.8 697.5,467.8 699.1,467.8 700.7,467.9 702.3,467.9 704.0,467.9 705.6,467.0 707.2,468.0 708.8,468.0 710.5,468.1 712.1,468.1 713.7,468.1 715.3,468.2 716.9,467.2 718.6,469.2 720.2,468.3 721.8,469.3 723.4,468.3 725.1,468.4 726.7,468.4 728.3,468.4 729.9,468.5 731.5,468.5 733.1,469.5 734.7,469.6 736.3,468.6 737.9,468.6 739.5,468.7 741.1,468.7 742.7,468.8 744.3,468.8 745.9,468.8 747.5,469.9 749.1,469.9 750.7,468.9 752.3,468.0 753.9,468.0 755.5,468.0 757.1,469.1 758.7,469.1 760.3,469.2 761.9,468.2 763.5,469.2 765.1,469.3 766.7,469.3 768.3,469.3 769.9,469.4 771.5,469.4 773.1,468.5 774.7,470.5 776.3,469.5 777.9,469.5 779.6,468.5 781.2,469.5 782.9,469.5 784.5,469.5 786.1,469.5 787.8,469.5 789.4,469.5 791.0,468.5 792.7,469.5 794.3,469.5 796.0,469.5 797.6,469.5 799.2,468.5 800.9,469.5 802.5,469.5 804.2,469.5 805.8,468.5 807.4,469.5 809.1,469.5 810.7,469.5 812.3,469.5 814.0,470.5 815.6,469.5 817.3,470.5 818.9,469.5 820.5,469.5 822.2,469.5 823.8,469.5 825.5,469.5 827.1,469.5 828.7,470.5 830.4,469.5 832.0,469.5 833.6,469.5 835.2,468.5 836.8,469.5 838.4,469.5 840.1,469.5 841.7,469.5 843.3,470.5 844.9,470.5 846.5,469.5 848.1,468.5 849.7,469.5 851.3,469.5 852.9,469.5 854.6,469.5 856.2,469.5 857.8,468.5 859.4,469.5 861.0,470.5 862.6,470.5 864.2,470.5 865.8,469.5 867.4,469.5 869.0,469.5 870.7,469.5 872.3,468.5 873.9,470.5 875.5,469.5 877.1,470.5 878.7,469.5 880.3,469.5 881.9,469.5 883.5,469.5 885.2,469.5 886.8,468.5 888.4,469.5 890.0,469.5 891.6,469.5 893.2,469.5 894.8,469.5 896.4,469.5 898.0,470.5 899.6,470.5 901.3,469.5 902.9,468.5 904.5,469.5 906.1,469.5 907.7,469.5 909.3,469.5 910.9,469.5 912.5,469.5 914.1,469.5 915.8,469.5 917.4,469.5 919.0,469.5 920.6,468.5 922.2,470.5 923.8,469.5 925.4,470.5 927.0,469.5 928.6,469.5 930.2,469.5 931.9,469.5 933.5,469.5 935.1,470.5 936.7,469.5 938.3,469.5 939.9,469.5 941.5,469.5 943.1,470.5 944.7,469.5 946.4,469.5 948.0,469.5 949.6,469.5 951.2,468.5 952.8,470.5 954.4,469.5 956.0,469.5 957.6,469.5 959.2,469.5 960.9,469.5 962.5,469.5 964.1,469.5 965.7,469.5 967.3,469.5 968.9,468.5 971.1,471.4 973.3,471.3 974.9,470.9 976.5,470.5 978.1,470.1 979.7,469.7 981.3,469.3 983.0,470.0 984.7,469.7 986.4,471.4 988.1,472.1 989.8,472.7 991.5,472.4 993.5,473.9 995.6,474.4 997.6,474.8 999.2,474.8 1000.8,474.7 1002.5,474.7 1004.1,475.7 1005.7,474.6 1007.3,474.6 1008.9,474.5 1010.6,474.5 1012.2,474.5 1013.8,474.4 1015.4,473.4 1017.0,474.3 1018.7,474.3 1020.3,474.3 1021.9,474.2 1023.5,474.2 1025.1,474.1 1026.8,475.1 1028.4,474.1 1030.0,474.0 1031.6,474.0 1033.2,473.9 1034.9,474.9 1036.5,473.9 1038.1,473.8 1039.7,473.8 1041.3,473.7 1043.0,473.7 1044.6,473.7 1046.2,473.6 1047.8,472.6 1049.4,473.5 1051.1,473.5 1052.7,473.5 1054.3,473.4 1055.9,472.8 1057.5,472.2 1059.2,470.6 1060.8,470.9 1062.4,470.3 1064.1,469.8 1065.8,469.3 1067.5,469.8 1069.1,468.3 1070.8,467.8 1072.5,467.3 1074.5,467.7 1076.6,466.0 1078.6,465.3 1080.2,465.5 1081.8,465.6 1083.5,465.7 1085.1,466.9 1086.7,466.0 1088.3,466.1 1089.9,466.3 1091.6,466.4 1093.2,466.5 1094.8,466.7 1096.4,466.8 1098.0,467.9 1099.7,467.1 1101.3,467.2 1102.9,467.3" fill="none" stroke="#000" stroke-opacity="0.1" stroke-width="1.5" stroke-linejoin="round"/><polyline points="171.0,467.6 172.7,466.6 174.3,466.6 176.0,467.6 177.7,466.6 179.3,468.6 181.0,467.6 182.7,467.6 184.3,467.6 186.0,467.6 187.3,468.0 189.0,469.0 190.7,469.0 192.4,469.0 194.0,470.0 195.7,468.0 197.4,468.0 199.1,469.0 200.8,468.0 202.5,469.0 204.2,469.0 205.9,469.0 207.5,468.0 209.2,469.0 210.9,469.0 212.6,468.0 215.7,471.7 217.3,471.7 218.9,471.7 220.5,471.7 222.1,471.7 223.7,471.7 225.3,471.7 226.9,471.7 228.5,470.7 230.2,472.7 231.8,471.7 233.4,471.7 235.0,471.7 236.6,471.7 238.2,471.7 239.8,472.7 241.4,472.7 243.0,472.7 244.6,471.7 246.2,471.7 247.8,472.7 249.4,471.7 251.0,471.7 252.6,471.7 254.2,471.7 255.8,470.7 257.4,471.7 259.1,471.7 260.7,471.7 262.3,472.7 263.9,471.7 265.5,471.7 267.1,471.7 268.7,471.7 270.3,471.7 271.9,471.7 273.5,472.7 275.1,471.7 276.7,471.7 278.3,471.7 279.9,472.7 281.5,470.7 283.1,471.7 284.7,471.7 286.3,471.7 288.0,472.7 289.6,471.7 291.2,471.7 292.8,471.7 294.4,471.7 296.0,471.7 297.6,471.7 299.2,471.7 300.8,471.7 302.8,469.6 304.4,469.6 306.1,468.6 307.7,468.6 309.4,468.6 311.0,469.6 313.0,471.7 314.7,472.6 316.3,471.5 318.0,471.4 319.6,471.3 321.3,470.2 322.9,471.2 324.6,471.1 326.2,471.0 327.9,470.9 329.5,470.8 331.2,470.7 333.1,469.7 334.9,468.6 336.8,467.6 338.6,465.5 340.5,465.5 342.1,464.2 343.8,464.0 345.4,464.8 347.0,464.5 348.6,464.2 350.2,463.0 351.9,463.8 353.5,464.5 355.1,463.2 356.8,463.0 358.4,462.8 360.0,463.5 363.0,461.0 364.8,461.4 366.5,461.7 368.2,461.1 370.0,462.5 371.8,462.8 373.5,463.2 375.1,463.2 376.8,463.2 378.4,464.2 380.1,462.2 381.8,463.2 383.4,463.2 385.1,463.2 386.7,464.2 388.4,463.2 390.0,463.2 391.7,463.4 393.5,463.7 395.2,463.9 396.9,464.2 398.7,464.4 400.4,464.7 402.0,466.2 403.7,465.9 405.5,465.7 407.2,464.4 408.9,465.2 410.7,464.9 412.4,464.7 414.1,464.8 415.9,465.0 417.6,464.1 419.4,465.2 421.1,465.4 422.9,466.5 424.9,466.2 426.9,467.0 428.9,467.7 431.9,466.2 433.5,466.2 435.1,466.2 436.8,466.2 438.4,465.2 440.0,466.2 441.6,466.2 443.2,466.2 444.9,467.2 446.5,466.2 448.1,465.2 449.7,466.2 451.3,466.2 452.9,466.2 454.6,466.2 456.2,467.2 457.8,467.2 459.4,466.2 461.0,466.2 462.7,465.2 464.3,465.2 465.9,467.2 467.5,466.2 469.1,467.2 470.8,466.2 472.4,466.2 474.0,466.2 475.6,465.2 477.2,466.2 478.8,466.2 480.5,465.2 482.1,466.2 483.7,466.2 485.3,466.2 486.9,467.2 488.6,465.2 490.2,466.2 491.8,466.2 493.7,467.6 495.6,468.9 497.4,471.3 499.3,471.7 500.9,471.7 502.5,471.7 504.1,471.7 505.8,471.7 507.4,471.7 509.0,470.7 510.6,471.7 512.2,472.7 513.8,471.7 515.4,471.7 517.1,471.7 518.7,470.7 520.3,471.7 521.9,471.7 523.5,471.7 525.1,471.7 526.7,471.7 528.4,471.7 530.0,471.7 531.6,470.7 533.2,471.7 534.8,471.7 536.4,471.7 538.0,471.7 539.7,471.7 541.3,471.7 542.9,471.7 544.5,471.7 546.1,471.7 547.7,471.7 549.3,471.7 551.0,471.7 552.6,471.7 554.2,471.7 555.8,471.7 557.4,471.7 559.0,471.7 560.6,471.7 562.3,471.7 563.9,471.7 565.5,471.7 567.1,471.7 568.7,471.7 570.3,470.7 571.9,471.7 573.6,471.7 575.2,471.7 576.8,471.7 578.4,472.7 580.4,470.3 582.5,469.0 584.5,468.6 586.9,465.6 589.3,465.5 590.9,464.4 592.6,465.4 594.2,465.3 595.8,465.2 597.4,465.1 599.1,466.1 600.7,465.0 602.4,465.0 604.0,465.0 605.7,465.0 607.3,466.0 609.0,466.0 610.6,464.9 612.3,465.9 614.0,464.9 615.6,464.9 617.3,464.9 618.9,463.9 620.6,464.9 622.2,465.9 623.9,464.9 625.6,464.9 627.2,463.8 628.9,464.8 630.5,464.8 632.2,464.8 633.8,464.8 635.5,464.8 637.1,464.8 638.7,464.9 640.4,464.9 642.0,464.9 643.6,465.0 645.2,465.0 646.9,464.0 648.5,465.1 650.1,464.1 651.7,465.1 653.4,464.2 655.0,464.2 656.6,465.2 658.2,465.3 659.8,465.3 661.5,465.3 663.1,465.4 664.7,464.4 666.3,465.4 668.0,465.5 669.6,465.5 671.2,466.5 672.8,465.6 674.4,465.6 676.1,466.6 677.7,465.7 679.3,466.7 680.9,465.7 682.6,465.8 684.2,464.8 685.8,465.8 687.4,465.9 689.1,466.9 690.7,465.9 692.3,466.0 693.9,466.0 695.5,466.0 697.2,466.1 698.8,466.1 700.4,466.1 702.0,466.2 703.7,466.2 705.3,465.2 706.9,466.3 708.5,466.3 710.1,466.3 711.8,466.4 713.4,466.4 715.0,466.4 716.6,465.5 718.3,467.5 719.9,466.5 721.5,467.6 723.1,466.6 724.8,466.6 726.4,466.7 728.0,466.7 729.6,466.7 731.2,466.8 732.8,467.8 734.4,467.8 736.0,466.9 737.6,466.9 739.2,467.0 740.8,467.0 742.4,467.0 744.0,467.1 745.6,467.1 747.2,468.1 748.8,468.2 750.4,467.2 752.0,466.2 753.6,466.3 755.2,466.3 756.8,467.4 758.4,467.4 760.0,467.4 761.6,466.5 763.2,467.5 764.8,467.5 766.4,467.6 768.0,467.6 769.6,467.7 771.2,467.7 772.8,466.7 774.4,468.8 776.0,467.8 777.6,467.8 779.3,466.8 780.9,467.8 782.6,467.8 784.2,467.8 785.8,467.8 787.5,467.8 789.1,467.8 790.7,466.8 792.4,467.8 794.0,467.8 795.7,467.8 797.3,467.8 798.9,466.8 800.6,467.8 802.2,467.8 803.9,467.8 805.5,466.8 807.1,467.8 808.8,467.8 810.4,467.8 812.0,467.8 813.7,468.8 815.3,467.8 817.0,468.8 818.6,467.8 820.2,467.8 821.9,467.8 823.5,467.8 825.1,467.8 826.8,467.8 828.4,468.8 830.1,467.8 831.7,467.8 833.3,467.8 834.9,466.8 836.5,467.8 838.1,467.8 839.8,467.8 841.4,467.8 843.0,468.8 844.6,468.8 846.2,467.8 847.8,466.8 849.4,467.8 851.0,467.8 852.6,467.8 854.2,467.8 855.9,467.8 857.5,466.8 859.1,467.8 860.7,468.8 862.3,468.8 863.9,468.8 865.5,467.8 867.1,467.8 868.7,467.8 870.4,467.8 872.0,466.8 873.6,468.8 875.2,467.8 876.8,468.8 878.4,467.8 880.0,467.8 881.6,467.8 883.2,467.8 884.8,467.8 886.5,466.8 888.1,467.8 889.7,467.8 891.3,467.8 892.9,467.8 894.5,467.8 896.1,467.8 897.7,468.8 899.3,468.8 901.0,467.8 902.6,466.8 904.2,467.8 905.8,467.8 907.4,467.8 909.0,467.8 910.6,467.8 912.2,467.8 913.8,467.8 915.5,467.8 917.1,467.8 918.7,467.8 920.3,466.8 921.9,468.8 923.5,467.8 925.1,468.8 926.7,467.8 928.3,467.8 929.9,467.8 931.6,467.8 933.2,467.8 934.8,468.8 936.4,467.8 938.0,467.8 939.6,467.8 941.2,467.8 942.8,468.8 944.4,467.8 946.1,467.8 947.7,467.8 949.3,467.8 950.9,466.8 952.5,468.8 954.1,467.8 955.7,467.8 957.3,467.8 958.9,467.8 960.5,467.8 962.2,467.8 963.8,467.8 965.4,467.8 967.0,467.8 968.6,466.8 970.8,469.7 973.0,469.6 974.6,469.2 976.2,468.8 977.8,468.4 979.4,468.0 981.0,467.6 982.7,468.3 984.4,468.0 986.1,469.6 987.8,470.3 989.5,471.0 991.2,470.7 993.2,472.2 995.3,472.6 997.3,473.1 998.9,473.1 1000.5,473.0 1002.2,473.0 1003.8,473.9 1005.4,472.9 1007.0,472.9 1008.6,472.8 1010.3,472.8 1011.9,472.7 1013.5,472.7 1015.1,471.7 1016.7,472.6 1018.4,472.6 1020.0,472.5 1021.6,472.5 1023.2,472.5 1024.8,472.4 1026.5,473.4 1028.1,472.3 1029.7,472.3 1031.3,472.3 1032.9,472.2 1034.6,473.2 1036.2,472.1 1037.8,472.1 1039.4,472.1 1041.0,472.0 1042.7,472.0 1044.3,471.9 1045.9,471.9 1047.5,470.9 1049.1,471.8 1050.8,471.8 1052.4,471.7 1054.0,471.7 1055.6,471.1 1057.2,470.5 1058.9,468.8 1060.5,469.2 1062.1,468.6 1063.8,468.1 1065.5,467.6 1067.2,468.1 1068.8,466.6 1070.5,466.1 1072.2,465.6 1074.2,465.9 1076.3,464.3 1078.3,463.6 1079.9,463.7 1081.5,463.9 1083.2,464.0 1084.8,465.1 1086.4,464.3 1088.0,464.4 1089.6,464.5 1091.3,464.7 1092.9,464.8 1094.5,464.9 1096.1,465.1 1097.7,466.2 1099.4,465.3 1101.0,465.5 1102.6,465.6" fill="none" stroke="#bd7cf6" stroke-width="2" stroke-linejoin="round"/><polyline points="171.4,356.9 204.9,356.9 205.9,358.1 286.4,358.1 290.4,357.0 395.4,356.5 438.0,356.5 440.0,357.7 484.6,357.7 486.7,358.7 552.5,358.5 554.5,357.1 617.6,356.0 618.9,354.7 619.9,354.7 621.4,356.0 625.4,356.0 626.8,354.7 702.2,354.7 704.8,356.5 708.4,355.0 712.7,356.5 716.7,354.7 723.4,354.7 724.6,356.0 817.2,356.0 819.8,357.3 822.4,356.0 845.4,356.3 847.4,355.3 850.2,356.5 852.8,356.8 978.4,357.1 980.4,358.7 987.5,358.3 989.6,356.9 1054.4,357.7 1060.4,357.7 1061.4,356.7 1103.0,356.7" fill="none" stroke="#000" stroke-opacity="0.1" stroke-width="3.0" stroke-linejoin="round"/><polyline points="171.3,356.1 204.8,356.1 205.8,357.3 286.3,357.3 290.3,356.2 395.3,355.7 437.9,355.7 439.9,356.9 484.5,356.9 486.6,357.9 552.4,357.7 554.4,356.3 617.5,355.2 618.8,353.9 619.8,353.9 621.3,355.2 625.3,355.2 626.7,353.9 702.1,353.9 704.7,355.7 708.3,354.2 712.6,355.7 716.6,353.9 723.3,353.9 724.5,355.2 817.1,355.2 819.7,356.5 822.3,355.2 845.3,355.5 847.3,354.5 850.1,355.7 852.7,356.0 978.3,356.3 980.3,357.9 987.4,357.5 989.5,356.1 1054.3,356.9 1060.3,356.9 1061.3,355.9 1102.9,355.9" fill="none" stroke="#000" stroke-opacity="0.1" stroke-width="1.5" stroke-linejoin="round"/><polyline points="171.0,354.4 204.5,354.4 205.5,355.6 286.0,355.6 290.0,354.5 395.0,354.0 437.6,354.0 439.6,355.2 484.2,355.2 486.3,356.2 552.1,356.0 554.1,354.6 617.2,353.5 618.5,352.2 619.5,352.2 621.0,353.5 625.0,353.5 626.4,352.2 701.8,352.2 704.4,354.0 708.0,352.5 712.3,354.0 716.3,352.2 723.0,352.2 724.2,353.5 816.8,353.5 819.4,354.8 822.0,353.5 845.0,353.8 847.0,352.8 849.8,354.0 852.4,354.3 978.0,354.6 980.0,356.2 987.1,355.8 989.2,354.4 1054.0,355.2 1060.0,355.2 1061.0,354.2 1102.6,354.2" fill="none" stroke="#000000" stroke-width="2" stroke-linejoin="round"/><polygon points="208.5,534.0 211.0,522.0 212.6,399.0 213.4,478.0 215.0,462.0 216.5,400.0 218.0,300.0 218.8,250.0 219.8,190.0 222.4,181.8 223.3,167.7 224.5,169.0 226.3,185.7 228.2,198.4 229.5,190.0 231.1,174.0 234.0,159.5 235.5,160.4 236.5,183.8 238.8,199.7 242.7,212.4 244.6,208.0 247.5,217.2 248.5,245.0 249.5,250.0 256.3,277.2 257.2,298.6 261.1,300.6 264.0,306.4 267.9,302.5 271.8,304.5 273.8,308.4 275.7,347.3 278.6,352.1 281.6,350.2 283.5,354.1 294.2,351.2 297.1,354.1 327.3,356.0 331.2,359.0 332.8,534.0" fill="#edc240" fill-opacity="0.21" stroke="#dfba5c" stroke-width="1.5" stroke-opacity="0.6" stroke-linejoin="round"/><polygon points="491.5,534.0 493.5,520.0 494.4,384.0 495.2,470.0 497.4,440.0 498.4,345.0 500.4,224.6 501.5,200.0 503.5,183.8 504.9,166.3 506.9,179.9 509.8,177.9 512.7,153.1 514.2,169.2 516.1,156.0 517.6,169.2 519.0,174.0 522.0,180.9 523.9,177.0 525.4,181.8 526.8,176.5 529.0,178.0 531.7,178.9 533.6,185.7 535.1,188.6 535.5,224.2 538.9,222.2 541.0,226.0 544.3,219.3 546.2,233.9 548.0,255.0 549.0,272.7 552.1,282.8 558.2,286.9 561.2,297.0 562.2,346.0 566.3,350.0 568.0,346.0 570.0,351.0 576.0,351.0 578.4,354.2 579.5,368.4 580.5,534.0" fill="#edc240" fill-opacity="0.21" stroke="#dfba5c" stroke-width="1.5" stroke-opacity="0.6" stroke-linejoin="round"/><polygon points="983.0,534.0 984.5,520.0 985.1,409.0 985.8,500.0 988.1,460.0 988.5,345.0 992.2,225.0 993.8,170.0 995.5,155.7 998.2,169.3 1000.0,168.0 1003.1,144.0 1006.0,133.3 1009.9,130.9 1011.8,134.3 1014.3,126.5 1015.7,135.3 1018.2,122.6 1019.6,134.3 1021.1,126.0 1022.5,135.3 1023.5,128.5 1025.4,136.3 1027.9,130.0 1029.3,139.2 1030.3,133.3 1031.0,173.0 1037.9,176.2 1038.7,200.6 1041.1,203.0 1043.5,201.4 1045.2,208.7 1047.6,237.9 1049.2,241.2 1052.5,242.8 1053.5,260.0 1054.0,534.0" fill="#edc240" fill-opacity="0.21" stroke="#dfba5c" stroke-width="1.5" stroke-opacity="0.6" stroke-linejoin="round"/><polygon points="209.0,534.0 212.0,532.0 214.6,480.8 219.7,452.4 222.8,451.4 225.8,460.5 229.8,461.5 233.9,460.5 234.9,470.7 246.0,470.7 248.0,478.8 255.2,479.8 256.2,487.9 271.4,489.9 273.4,497.0 331.2,496.0 332.2,529.4 334.2,534.0" fill="#afd8f8" fill-opacity="0.32" stroke="#a3abab" stroke-width="1.5" stroke-opacity="0.85" stroke-linejoin="round"/><polygon points="491.5,534.0 492.3,533.5 495.4,480.8 501.4,454.4 505.5,459.5 510.0,457.5 515.6,464.6 522.0,463.6 526.8,462.6 532.9,463.6 533.9,471.7 545.0,472.7 547.0,484.8 558.2,485.9 560.2,496.0 577.4,497.0 579.5,532.5 581.5,534.0" fill="#afd8f8" fill-opacity="0.32" stroke="#a3abab" stroke-width="1.5" stroke-opacity="0.85" stroke-linejoin="round"/><polygon points="983.0,534.0 984.0,532.3 986.7,500.3 989.4,478.9 990.7,462.8 994.7,460.2 1013.4,458.8 1024.1,456.2 1028.1,460.2 1029.5,465.5 1037.5,468.2 1038.8,477.5 1052.2,478.9 1053.5,532.3 1054.0,534.0" fill="#afd8f8" fill-opacity="0.32" stroke="#a3abab" stroke-width="1.5" stroke-opacity="0.85" stroke-linejoin="round"/><polygon points="211.0,534.0 212.5,520.0 213.2,480.0 213.6,465.0 215.7,431.0 218.7,417.0 223.8,410.0 229.8,404.8 234.9,398.8 238.0,402.8 248.0,392.7 256.2,378.5 260.0,377.5 274.4,365.3 275.4,370.4 286.6,365.3 294.7,360.3 306.8,358.2 319.0,357.2 327.0,357.2 331.2,362.3 332.2,534.0" fill="#ff7f0e" fill-opacity="0.2" stroke="none" stroke-width="0" stroke-opacity="0" stroke-linejoin="round"/><polyline points="213.6,465.0 215.7,431.0 218.7,417.0 220.4,415.6 222.1,412.3 223.8,410.0 225.8,408.3 227.8,406.5 229.8,404.8 231.5,402.8 233.2,400.8 234.9,398.8 238.0,402.8 239.7,401.1 241.3,399.4 243.0,397.8 244.7,396.1 246.3,394.4 248.0,393.6 249.6,389.9 251.3,387.0 252.9,383.3 254.6,381.3 256.2,379.4 258.1,378.0 260.0,377.5 261.8,376.9 263.6,373.6 265.4,373.8 267.2,371.4 269.0,369.9 270.8,367.5 272.6,365.9 274.4,365.3 275.4,369.5 277.0,369.7 278.6,368.9 280.2,367.3 281.8,368.4 283.4,365.9 285.0,365.1 286.6,365.3 288.2,364.3 289.8,363.3 291.5,362.3 293.1,361.3 294.7,359.4 296.4,360.0 298.2,359.7 299.9,359.4 301.6,359.1 303.3,359.7 305.1,359.4 306.8,358.2 308.5,358.1 310.3,357.9 312.0,358.7 313.8,358.5 315.5,357.5 317.3,356.4 319.0,357.2 320.6,357.2 322.2,357.2 323.8,357.2 325.4,357.2 327.0,358.1 329.1,360.6 331.2,362.3" fill="none" stroke="#ee9a55" stroke-width="1.3" stroke-opacity="0.85" stroke-linejoin="round"/><polygon points="494.0,534.0 494.4,482.8 495.4,480.8 497.4,465.0 500.4,435.2 507.5,425.1 515.6,419.0 521.7,417.0 525.8,410.9 529.8,400.8 533.9,392.7 540.0,382.6 546.0,375.5 550.0,376.5 558.2,369.4 561.2,371.4 566.3,366.3 576.4,361.3 579.5,368.4 580.0,534.0" fill="#ff7f0e" fill-opacity="0.2" stroke="none" stroke-width="0" stroke-opacity="0" stroke-linejoin="round"/><polyline points="497.4,465.0 500.4,435.2 502.2,432.7 503.9,430.1 505.7,428.5 507.5,426.0 509.1,423.9 510.7,422.7 512.4,421.4 514.0,420.2 515.6,419.0 517.6,418.3 519.7,417.7 521.7,417.0 523.8,414.8 525.8,410.9 527.8,405.0 529.8,400.8 531.8,396.8 533.9,392.7 535.9,390.2 538.0,386.0 540.0,382.6 542.0,380.2 544.0,377.9 546.0,375.5 548.0,376.0 550.0,376.5 551.6,374.2 553.3,373.7 554.9,372.2 556.6,370.8 558.2,369.4 561.2,371.4 562.9,370.6 564.6,368.0 566.3,366.3 568.0,365.5 569.7,363.7 571.3,364.7 573.0,363.0 574.7,363.0 576.4,361.3 579.5,368.4" fill="none" stroke="#ee9a55" stroke-width="1.3" stroke-opacity="0.85" stroke-linejoin="round"/><polygon points="985.5,534.0 986.1,521.3 986.7,521.6 989.4,497.6 993.4,478.9 997.4,473.5 1004.1,470.9 1012.1,460.2 1018.8,446.8 1025.5,430.8 1029.5,422.8 1037.5,409.4 1045.5,396.0 1052.2,390.7 1053.0,534.0" fill="#ff7f0e" fill-opacity="0.2" stroke="none" stroke-width="0" stroke-opacity="0" stroke-linejoin="round"/><polyline points="1012.1,459.3 1013.8,456.9 1015.5,453.5 1017.1,450.1 1018.8,445.9 1020.5,443.7 1022.1,438.8 1023.8,433.9 1025.5,431.7 1027.5,426.8 1029.5,422.8 1031.1,420.1 1032.7,417.4 1034.3,414.8 1035.9,413.0 1037.5,409.4 1039.1,407.6 1040.7,404.0 1042.3,401.4 1043.9,398.7 1045.5,396.0 1047.2,394.7 1048.8,393.4 1050.5,392.0 1052.2,390.7" fill="none" stroke="#ee9a55" stroke-width="1.3" stroke-opacity="0.85" stroke-linejoin="round"/><polyline points="274.8,133.9 275.8,154.2 277.2,155.1 278.2,191.1 279.4,194.5 280.7,183.4 281.4,184.5 282.6,202.5 282.9,216.8 284.9,236.3 286.4,234.5 288.8,245.0 290.0,246.8 293.1,273.2 294.7,240.7 297.1,269.1 303.2,277.2 309.5,293.5 312.9,312.7 315.1,320.6 316.8,321.8 317.4,303.6 318.5,325.2 320.2,330.8 322.5,339.9 323.1,350.1 324.4,347.5 327.0,356.9 328.7,346.7 331.6,352.4" fill="none" stroke="#000" stroke-opacity="0.1" stroke-width="3.0" stroke-linejoin="round"/><polyline points="274.7,133.1 275.7,153.4 277.1,154.3 278.1,190.3 279.3,193.7 280.6,182.6 281.3,183.7 282.5,201.7 282.8,216.0 284.8,235.5 286.3,233.7 288.7,244.2 289.9,246.0 293.0,272.4 294.6,239.9 297.0,268.3 303.1,276.4 309.4,292.7 312.8,311.9 315.0,319.8 316.7,321.0 317.3,302.8 318.4,324.4 320.1,330.0 322.4,339.1 323.0,349.3 324.3,346.7 326.9,356.1 328.6,345.9 331.5,351.6" fill="none" stroke="#000" stroke-opacity="0.1" stroke-width="1.5" stroke-linejoin="round"/><polyline points="274.4,131.4 275.4,151.7 276.8,152.6 277.8,188.6 279.0,192.0 280.3,180.9 281.0,182.0 282.2,200.0 282.5,214.3 284.5,233.8 286.0,232.0 288.4,242.5 289.6,244.3 292.7,270.7 294.3,238.2 296.7,266.6 302.8,274.7 309.1,291.0 312.5,310.2 314.7,318.1 316.4,319.3 317.0,301.1 318.1,322.7 319.8,328.3 322.1,337.4 322.7,347.6 324.0,345.0 326.6,354.4 328.3,344.2 331.2,349.9" fill="none" stroke="#888888" stroke-width="2" stroke-linejoin="round"/><polyline points="561.6,117.7 564.2,181.4 566.1,200.9 567.6,169.7 569.1,202.5 569.5,231.5 572.4,252.9 574.3,226.7 576.3,229.6 577.2,225.7 578.7,257.5 578.8,367.8" fill="none" stroke="#000" stroke-opacity="0.1" stroke-width="3.0" stroke-linejoin="round"/><polyline points="561.5,116.9 564.1,180.6 566.0,200.1 567.5,168.9 569.0,201.7 569.4,230.7 572.3,252.1 574.2,225.9 576.2,228.8 577.1,224.9 578.6,256.7 578.7,367.0" fill="none" stroke="#000" stroke-opacity="0.1" stroke-width="1.5" stroke-linejoin="round"/><polyline points="561.2,115.2 563.8,178.9 565.7,198.4 567.2,167.2 568.7,200.0 569.1,229.0 572.0,250.4 573.9,224.2 575.9,227.1 576.8,223.2 578.3,255.0 578.4,365.3" fill="none" stroke="#888888" stroke-width="2" stroke-linejoin="round"/><polyline points="226.0,476.5 230.2,427.5 235.3,383.0 236.2,372.5 240.1,310.9 244.0,291.4 248.9,277.8 249.9,260.3 251.9,263.5 254.7,277.8 256.4,272.6 258.0,267.4 259.6,262.2 262.5,272.0 264.2,272.0 265.9,272.0 267.6,273.2 269.3,272.0 271.9,273.5 273.5,264.9 275.1,256.4 277.1,252.5 292.7,272.0 304.3,276.8 317.9,280.7 329.6,287.5" fill="none" stroke="#000" stroke-opacity="0.1" stroke-width="3.0" stroke-linejoin="round"/><polyline points="225.9,475.7 230.1,426.7 235.2,382.2 236.1,371.7 240.0,310.1 243.9,290.6 248.8,277.0 249.8,259.5 251.8,262.7 254.6,277.0 256.2,271.8 257.9,266.6 259.5,261.4 262.4,271.2 264.1,271.2 265.8,271.2 267.5,272.4 269.2,271.2 271.8,272.7 273.4,264.2 275.0,255.6 277.0,251.7 292.6,271.2 304.2,276.0 317.8,279.9 329.5,286.7" fill="none" stroke="#000" stroke-opacity="0.1" stroke-width="1.5" stroke-linejoin="round"/><polyline points="225.6,474.0 229.8,425.0 234.9,380.5 235.8,370.0 239.7,308.4 243.6,288.9 248.5,275.3 249.5,257.8 251.5,261.0 254.3,275.3 255.9,270.1 257.6,264.9 259.2,259.7 262.1,269.5 263.8,269.5 265.5,269.5 267.2,270.7 268.9,269.5 271.5,271.0 273.1,262.4 274.7,253.9 276.7,250.0 292.3,269.5 303.9,274.3 317.5,278.2 329.2,285.0" fill="none" stroke="#1f77b4" stroke-width="2" stroke-linejoin="round"/><polyline points="506.9,465.1 512.0,413.4 517.0,342.5 522.1,275.0 523.2,266.3 524.2,263.0 525.2,259.7 526.2,252.9 526.7,252.0 528.6,254.9 531.0,244.2 533.5,254.9 536.4,231.1 538.3,238.4 539.3,237.7 540.3,237.0 541.3,236.4 543.2,239.3 545.1,231.5 547.1,229.6 549.5,209.2 552.9,216.0 556.8,215.0 558.8,218.9 561.7,199.9 564.6,205.3 568.5,214.0 578.2,226.7" fill="none" stroke="#000" stroke-opacity="0.1" stroke-width="3.0" stroke-linejoin="round"/><polyline points="506.8,464.3 511.9,412.6 516.9,341.7 522.0,274.2 523.0,265.5 524.1,262.3 525.1,259.0 526.1,252.1 526.6,251.2 528.5,254.1 530.9,243.4 533.4,254.1 536.3,230.3 538.2,237.6 539.2,237.0 540.2,236.3 541.2,235.6 543.1,238.5 545.0,230.7 547.0,228.8 549.4,208.4 552.8,215.2 556.7,214.2 558.7,218.1 561.6,199.1 564.5,204.5 568.4,213.2 578.1,225.9" fill="none" stroke="#000" stroke-opacity="0.1" stroke-width="1.5" stroke-linejoin="round"/><polyline points="506.5,462.6 511.6,410.9 516.6,340.0 521.7,272.5 522.7,263.8 523.8,260.6 524.8,257.3 525.8,250.4 526.3,249.5 528.2,252.4 530.6,241.7 533.1,252.4 536.0,228.6 537.9,235.9 538.9,235.2 539.9,234.6 540.9,233.9 542.8,236.8 544.7,229.0 546.7,227.1 549.1,206.7 552.5,213.5 556.4,212.5 558.4,216.4 561.3,197.4 564.2,202.8 568.1,211.5 577.8,224.2" fill="none" stroke="#1f77b4" stroke-width="2" stroke-linejoin="round"/><polyline points="995.6,473.5 999.7,403.3 1003.4,367.5 1004.8,342.5 1007.5,303.3 1013.6,242.5 1015.3,222.4 1017.9,212.0 1019.1,210.8 1020.2,207.6 1021.3,204.5 1022.5,201.5 1023.6,196.5 1024.7,193.5 1025.8,192.5 1027.0,187.1 1028.1,185.7 1029.2,182.3 1030.3,181.0 1031.3,177.5 1032.3,178.0 1033.3,174.5 1035.4,177.5 1036.5,175.8 1037.5,174.1 1038.5,172.5 1040.4,162.1 1042.9,160.2 1045.3,167.5 1048.2,152.4 1051.1,151.4 1052.6,156.8" fill="none" stroke="#000" stroke-opacity="0.1" stroke-width="3.0" stroke-linejoin="round"/><polyline points="995.5,472.7 999.6,402.5 1003.3,366.7 1004.7,341.7 1007.4,302.5 1013.5,241.7 1015.2,221.6 1017.8,211.2 1018.9,210.1 1020.1,206.9 1021.2,203.7 1022.3,200.7 1023.5,195.7 1024.6,192.7 1025.7,191.7 1026.8,186.3 1028.0,185.0 1029.1,181.6 1030.2,180.2 1031.2,176.7 1032.2,177.2 1033.2,173.7 1035.3,176.7 1036.3,175.1 1037.4,173.4 1038.4,171.7 1040.3,161.3 1042.8,159.4 1045.2,166.7 1048.1,151.6 1051.0,150.6 1052.5,156.0" fill="none" stroke="#000" stroke-opacity="0.1" stroke-width="1.5" stroke-linejoin="round"/><polyline points="995.2,471.0 999.3,400.8 1003.0,365.0 1004.4,340.0 1007.1,300.8 1013.2,240.0 1014.9,219.9 1017.5,209.5 1018.6,208.3 1019.8,205.2 1020.9,202.0 1022.0,199.0 1023.2,194.0 1024.3,191.0 1025.4,190.0 1026.5,184.6 1027.7,183.2 1028.8,179.9 1029.9,178.5 1030.9,175.0 1031.9,175.5 1032.9,172.0 1035.0,175.0 1036.0,173.3 1037.1,171.7 1038.1,170.0 1040.0,159.6 1042.5,157.7 1044.9,165.0 1047.8,149.9 1050.7,148.9 1052.2,154.3" fill="none" stroke="#1f77b4" stroke-width="2" stroke-linejoin="round"/>
</svg>
<div class="foot"></div>
<div class="sep"></div>
<svg width="1135" height="617" viewBox="0 0 1135 617" style="font-family:'Liberation Sans',sans-serif">
<text x="25.23" y="539.30" font-size="12.7" fill="#505050" textLength="14.39" lengthAdjust="spacingAndGlyphs" stroke="#fff" stroke-width="0.3" stroke-opacity="0.85">10</text><text x="21.71" y="485.36" font-size="12.7" fill="#505050" textLength="18.04" lengthAdjust="spacingAndGlyphs" stroke="#fff" stroke-width="0.3" stroke-opacity="0.85">20</text><text x="22.28" y="431.43" font-size="12.7" fill="#505050" textLength="17.44" lengthAdjust="spacingAndGlyphs" stroke="#fff" stroke-width="0.3" stroke-opacity="0.85">30</text><text x="21.53" y="377.49" font-size="12.7" fill="#505050" textLength="18.22" lengthAdjust="spacingAndGlyphs" stroke="#fff" stroke-width="0.3" stroke-opacity="0.85">40</text><text x="22.55" y="323.55" font-size="12.7" fill="#505050" textLength="17.16" lengthAdjust="spacingAndGlyphs" stroke="#fff" stroke-width="0.3" stroke-opacity="0.85">50</text><text x="22.18" y="269.61" font-size="12.7" fill="#505050" textLength="17.55" lengthAdjust="spacingAndGlyphs" stroke="#fff" stroke-width="0.3" stroke-opacity="0.85">60</text><text x="22.53" y="215.68" font-size="12.7" fill="#505050" textLength="17.19" lengthAdjust="spacingAndGlyphs" stroke="#fff" stroke-width="0.3" stroke-opacity="0.85">70</text><text x="21.92" y="161.74" font-size="12.7" fill="#505050" textLength="17.82" lengthAdjust="spacingAndGlyphs" stroke="#fff" stroke-width="0.3" stroke-opacity="0.85">80</text><text x="22.46" y="107.80" font-size="12.7" fill="#505050" textLength="17.25" lengthAdjust="spacingAndGlyphs" stroke="#fff" stroke-width="0.3" stroke-opacity="0.85">90</text><text x="57.29" y="539.30" font-size="12.7" fill="#505050" textLength="25.56" lengthAdjust="spacingAndGlyphs" stroke="#fff" stroke-width="0.3" stroke-opacity="0.85">10.5</text><text x="60.40" y="496.15" font-size="12.7" fill="#505050" textLength="22.37" lengthAdjust="spacingAndGlyphs" stroke="#fff" stroke-width="0.3" stroke-opacity="0.85">11.0</text><text x="61.89" y="453.00" font-size="12.7" fill="#505050" textLength="20.88" lengthAdjust="spacingAndGlyphs" stroke="#fff" stroke-width="0.3" stroke-opacity="0.85">11.5</text><text x="56.61" y="409.85" font-size="12.7" fill="#505050" textLength="26.21" lengthAdjust="spacingAndGlyphs" stroke="#fff" stroke-width="0.3" stroke-opacity="0.85">12.0</text><text x="58.10" y="366.70" font-size="12.7" fill="#505050" textLength="24.73" lengthAdjust="spacingAndGlyphs" stroke="#fff" stroke-width="0.3" stroke-opacity="0.85">12.5</text><text x="56.97" y="323.55" font-size="12.7" fill="#505050" textLength="25.84" lengthAdjust="spacingAndGlyphs" stroke="#fff" stroke-width="0.3" stroke-opacity="0.85">13.0</text><text x="58.46" y="280.40" font-size="12.7" fill="#505050" textLength="24.36" lengthAdjust="spacingAndGlyphs" stroke="#fff" stroke-width="0.3" stroke-opacity="0.85">13.5</text><text x="55.96" y="237.25" font-size="12.7" fill="#505050" textLength="26.87" lengthAdjust="spacingAndGlyphs" stroke="#fff" stroke-width="0.3" stroke-opacity="0.85">14.0</text><text x="57.45" y="194.10" font-size="12.7" fill="#505050" textLength="25.39" lengthAdjust="spacingAndGlyphs" stroke="#fff" stroke-width="0.3" stroke-opacity="0.85">14.5</text><text x="57.29" y="150.95" font-size="12.7" fill="#505050" textLength="25.52" lengthAdjust="spacingAndGlyphs" stroke="#fff" stroke-width="0.3" stroke-opacity="0.85">15.0</text><text x="58.77" y="107.80" font-size="12.7" fill="#505050" textLength="24.04" lengthAdjust="spacingAndGlyphs" stroke="#fff" stroke-width="0.3" stroke-opacity="0.85">15.5</text><text x="109.78" y="538.50" font-size="11.3" fill="#505050" textLength="7.05" lengthAdjust="spacingAndGlyphs" stroke="#fff" stroke-width="0.3" stroke-opacity="0.85">5</text><text x="104.03" y="476.86" font-size="11.3" fill="#505050" textLength="12.73" lengthAdjust="spacingAndGlyphs" stroke="#fff" stroke-width="0.3" stroke-opacity="0.85">10</text><text x="105.38" y="415.21" font-size="11.3" fill="#505050" textLength="11.35" lengthAdjust="spacingAndGlyphs" stroke="#fff" stroke-width="0.3" stroke-opacity="0.85">15</text><text x="100.91" y="353.57" font-size="11.3" fill="#505050" textLength="15.96" lengthAdjust="spacingAndGlyphs" stroke="#fff" stroke-width="0.3" stroke-opacity="0.85">20</text><text x="102.24" y="291.93" font-size="11.3" fill="#505050" textLength="14.62" lengthAdjust="spacingAndGlyphs" stroke="#fff" stroke-width="0.3" stroke-opacity="0.85">25</text><text x="101.42" y="230.29" font-size="11.3" fill="#505050" textLength="15.44" lengthAdjust="spacingAndGlyphs" stroke="#fff" stroke-width="0.3" stroke-opacity="0.85">30</text><text x="102.73" y="168.64" font-size="11.3" fill="#505050" textLength="14.11" lengthAdjust="spacingAndGlyphs" stroke="#fff" stroke-width="0.3" stroke-opacity="0.85">35</text><text x="100.75" y="107.00" font-size="11.3" fill="#505050" textLength="16.13" lengthAdjust="spacingAndGlyphs" stroke="#fff" stroke-width="0.3" stroke-opacity="0.85">40</text><text x="158.71" y="538.50" font-size="11.3" fill="#505050" textLength="8.48" lengthAdjust="spacingAndGlyphs" stroke="#fff" stroke-width="0.3" stroke-opacity="0.85">0</text><text x="138.04" y="466.58" font-size="11.3" fill="#505050" textLength="29.08" lengthAdjust="spacingAndGlyphs" stroke="#fff" stroke-width="0.3" stroke-opacity="0.85">1000</text><text x="135.04" y="394.67" font-size="11.3" fill="#505050" textLength="32.13" lengthAdjust="spacingAndGlyphs" stroke="#fff" stroke-width="0.3" stroke-opacity="0.85">2000</text><text x="135.54" y="322.75" font-size="11.3" fill="#505050" textLength="31.62" lengthAdjust="spacingAndGlyphs" stroke="#fff" stroke-width="0.3" stroke-opacity="0.85">3000</text><text x="134.89" y="250.83" font-size="11.3" fill="#505050" textLength="32.28" lengthAdjust="spacingAndGlyphs" stroke="#fff" stroke-width="0.3" stroke-opacity="0.85">4000</text><text x="135.78" y="178.92" font-size="11.3" fill="#505050" textLength="31.38" lengthAdjust="spacingAndGlyphs" stroke="#fff" stroke-width="0.3" stroke-opacity="0.85">5000</text><text x="135.45" y="107.00" font-size="11.3" fill="#505050" textLength="31.71" lengthAdjust="spacingAndGlyphs" stroke="#fff" stroke-width="0.3" stroke-opacity="0.85">6000</text><text x="270.15" y="550.10" font-size="11.4" fill="#505050" textLength="31.23" lengthAdjust="spacingAndGlyphs" stroke="#fff" stroke-width="0.3" stroke-opacity="0.85">19:00</text><text x="398.35" y="550.10" font-size="11.4" fill="#505050" textLength="30.18" lengthAdjust="spacingAndGlyphs" stroke="#fff" stroke-width="0.3" stroke-opacity="0.85">19:30</text><text x="523.44" y="550.10" font-size="11.4" fill="#505050" textLength="35.62" lengthAdjust="spacingAndGlyphs" stroke="#fff" stroke-width="0.3" stroke-opacity="0.85">20:00</text><text x="651.63" y="550.10" font-size="11.4" fill="#505050" textLength="34.58" lengthAdjust="spacingAndGlyphs" stroke="#fff" stroke-width="0.3" stroke-opacity="0.85">20:30</text><text x="780.84" y="550.10" font-size="11.4" fill="#505050" textLength="31.53" lengthAdjust="spacingAndGlyphs" stroke="#fff" stroke-width="0.3" stroke-opacity="0.85">21:00</text><text x="909.03" y="550.10" font-size="11.4" fill="#505050" textLength="30.49" lengthAdjust="spacingAndGlyphs" stroke="#fff" stroke-width="0.3" stroke-opacity="0.85">21:30</text><text x="1034.48" y="550.10" font-size="11.4" fill="#505050" textLength="34.90" lengthAdjust="spacingAndGlyphs" stroke="#fff" stroke-width="0.3" stroke-opacity="0.85">22:00</text><text x="42.55" y="88.50" font-size="13" fill="#afafaf" textLength="36.10" lengthAdjust="spacingAndGlyphs">DHW</text><text x="101.53" y="88.50" font-size="13" fill="#afafaf" textLength="38.69" lengthAdjust="spacingAndGlyphs">FlowT</text><text x="162.27" y="88.50" font-size="13" fill="#afafaf" textLength="53.97" lengthAdjust="spacingAndGlyphs">ReturnT</text><text x="238.12" y="88.50" font-size="13" fill="#afafaf" textLength="58.10" lengthAdjust="spacingAndGlyphs">OutsideT</text><text x="319.38" y="88.50" font-size="13" fill="#afafaf" textLength="48.47" lengthAdjust="spacingAndGlyphs">RoomT</text><text x="389.15" y="88.50" font-size="13" fill="#afafaf" textLength="32.06" lengthAdjust="spacingAndGlyphs">Heat</text><text x="443.23" y="88.50" font-size="13" fill="#afafaf" textLength="50.51" lengthAdjust="spacingAndGlyphs">Electric</text><text x="515.15" y="88.50" font-size="13" fill="#afafaf" textLength="118.09" lengthAdjust="spacingAndGlyphs">Emitter spec heat</text><text x="655.53" y="88.50" font-size="13" fill="#afafaf" textLength="85.59" lengthAdjust="spacingAndGlyphs">Emitter spec</text><text x="762.72" y="88.50" font-size="13" fill="#afafaf" textLength="102.72" lengthAdjust="spacingAndGlyphs">System volume</text><text x="601.24" y="46.8" font-size="15.5" fill="#fff" textLength="12.31" lengthAdjust="spacingAndGlyphs">H</text><text x="655.35" y="46.8" font-size="15.5" fill="#fff" textLength="9.98" lengthAdjust="spacingAndGlyphs">6</text><text x="706.82" y="46.8" font-size="15.5" fill="#fff" textLength="12.54" lengthAdjust="spacingAndGlyphs">D</text><text x="758.20" y="46.8" font-size="15.5" fill="#fff" textLength="16.39" lengthAdjust="spacingAndGlyphs">W</text><text x="812.17" y="46.8" font-size="15.5" fill="#fff" textLength="14.46" lengthAdjust="spacingAndGlyphs">M</text><text x="869.05" y="45.4" font-size="11.5" fill="#fff" textLength="6.71" lengthAdjust="spacingAndGlyphs">+</text><text x="923.08" y="46.0" font-size="14" fill="#fff" textLength="4.62" lengthAdjust="spacingAndGlyphs">-</text><text x="974.24" y="45.9" font-size="13.6" fill="#fff" textLength="8.31" lengthAdjust="spacingAndGlyphs">&lt;</text><text x="1027.24" y="45.9" font-size="13.6" fill="#fff" textLength="8.31" lengthAdjust="spacingAndGlyphs">&gt;</text><text x="1069.44" y="46.80" font-size="15.5" fill="#fff" textLength="41.56" lengthAdjust="spacingAndGlyphs">BACK</text><text x="21.49" y="587.80" font-size="17" fill="#2a2a2a" textLength="128.96" lengthAdjust="spacingAndGlyphs" stroke="#eee" stroke-width="0.4">COP in window:</text><text x="153.19" y="587.80" font-size="17" fill="#222" textLength="35.76" lengthAdjust="spacingAndGlyphs">4.87</text><text x="900.94" y="588.60" font-size="14.5" fill="#2e2e2e" textLength="92.79" lengthAdjust="spacingAndGlyphs" stroke="#eee" stroke-width="0.35">(13.1 kW, 69 L)</text><text x="1016.52" y="588.90" font-size="16.4" fill="#2a2a2a" textLength="94.81" lengthAdjust="spacingAndGlyphs" stroke="#eee" stroke-width="0.4">HIDE DETAIL</text>
</svg>
</body></html>
